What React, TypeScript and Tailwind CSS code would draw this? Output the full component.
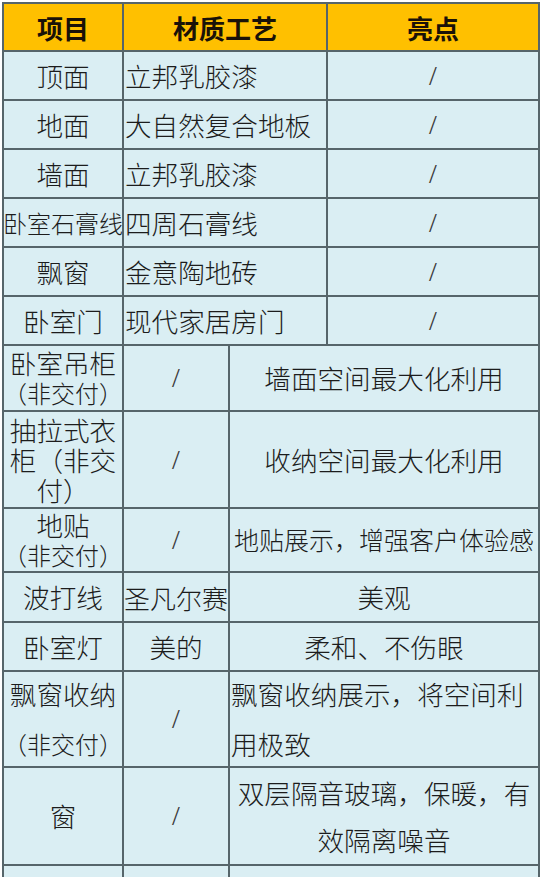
import React from "react";

const base =
  "bg-[#daeef3] flex items-center justify-center text-center overflow-visible whitespace-nowrap";

function Slash() {
  return (
    <span className="font-['Liberation_Serif',serif] text-[28px] text-[#3a3a3a]">/</span>
  );
}

function Lines({ lines, leading, sizes }: { lines: string[]; leading: string; sizes?: string[] }) {
  return (
    <div className="flex flex-col items-center">
      {lines.map((l, i) => (
        <div key={i} className={`${leading} ${sizes ? sizes[i] : ""} whitespace-nowrap`}>
          {l}
        </div>
      ))}
    </div>
  );
}

export default function App() {
  return (
    <div className="bg-white w-[542px] h-[877px] overflow-hidden font-['Noto_Sans_CJK_SC','Noto_Sans',sans-serif] font-light text-[26.6px] text-[#1c1c1c]">
      <div className="ml-[2px] mt-[2px] w-[538px] grid grid-cols-[118px_104px_96px_210px] grid-rows-[46px_47px_47px_47px_47px_47px_47px_64px_95px_62px_48px_47px_94px_96px_60px] gap-[2px] p-[2px] bg-[#56656a]">
        {/* header */}
        <div className="bg-[#ffc000] flex items-center justify-center font-bold text-[26px] text-[#1a1208]">项目</div>
        <div className="bg-[#ffc000] col-span-2 flex items-center justify-center font-bold text-[26px] text-[#1a1208]">材质工艺</div>
        <div className="bg-[#ffc000] flex items-center justify-center font-bold text-[26px] text-[#1a1208]">亮点</div>

        {/* rows 1-6 */}
        <div className={base}>顶面</div>
        <div className="bg-[#daeef3] col-span-2 flex items-center pl-[1px] whitespace-nowrap">立邦乳胶漆</div>
        <div className={base}><Slash /></div>

        <div className={base}>地面</div>
        <div className="bg-[#daeef3] col-span-2 flex items-center pl-[1px] whitespace-nowrap">大自然复合地板</div>
        <div className={base}><Slash /></div>

        <div className={base}>墙面</div>
        <div className="bg-[#daeef3] col-span-2 flex items-center pl-[1px] whitespace-nowrap">立邦乳胶漆</div>
        <div className={base}><Slash /></div>

        <div className={`${base} text-[24px]`}>卧室石膏线</div>
        <div className="bg-[#daeef3] col-span-2 flex items-center pl-[1px] whitespace-nowrap">四周石膏线</div>
        <div className={base}><Slash /></div>

        <div className={base}>飘窗</div>
        <div className="bg-[#daeef3] col-span-2 flex items-center pl-[1px] whitespace-nowrap">金意陶地砖</div>
        <div className={base}><Slash /></div>

        <div className={base}>卧室门</div>
        <div className="bg-[#daeef3] col-span-2 flex items-center pl-[1px] whitespace-nowrap">现代家居房门</div>
        <div className={base}><Slash /></div>

        {/* rows 7+ */}
        <div className={base}>
          <Lines lines={["卧室吊柜", "（非交付）"]} leading="leading-[30px]" sizes={["", "text-[24px]"]} />
        </div>
        <div className={base}><Slash /></div>
        <div className={`${base} col-span-2`}>墙面空间最大化利用</div>

        <div className={base}>
          <Lines lines={["抽拉式衣", "柜（非交", "付）"]} leading="leading-[30px]" />
        </div>
        <div className={base}><Slash /></div>
        <div className={`${base} col-span-2`}>收纳空间最大化利用</div>

        <div className={base}>
          <Lines lines={["地贴", "（非交付）"]} leading="leading-[30px]" sizes={["", "text-[24px]"]} />
        </div>
        <div className={base}><Slash /></div>
        <div className={`${base} col-span-2 text-[25px]`}>地贴展示，增强客户体验感</div>

        <div className={base}>波打线</div>
        <div className={`${base} text-[26px]`}>圣凡尔赛</div>
        <div className={`${base} col-span-2`}>美观</div>

        <div className={base}>卧室灯</div>
        <div className={base}>美的</div>
        <div className={`${base} col-span-2`}>柔和、不伤眼</div>

        <div className={base}>
          <Lines lines={["飘窗收纳", "（非交付）"]} leading="leading-[50px]" sizes={["", "text-[24px]"]} />
        </div>
        <div className={base}><Slash /></div>
        <div className="bg-[#daeef3] col-span-2 flex flex-col justify-center pl-[1px] leading-[50px]">
          <div>飘窗收纳展示，将空间利</div>
          <div>用极致</div>
        </div>

        <div className={base}>窗</div>
        <div className={base}><Slash /></div>
        <div className={`${base} col-span-2`}>
          <Lines lines={["双层隔音玻璃，保暖，有", "效隔离噪音"]} leading="leading-[47px]" />
        </div>

        <div className={base}></div>
        <div className={base}></div>
        <div className={`${base} col-span-2`}></div>
      </div>
    </div>
  );
}
